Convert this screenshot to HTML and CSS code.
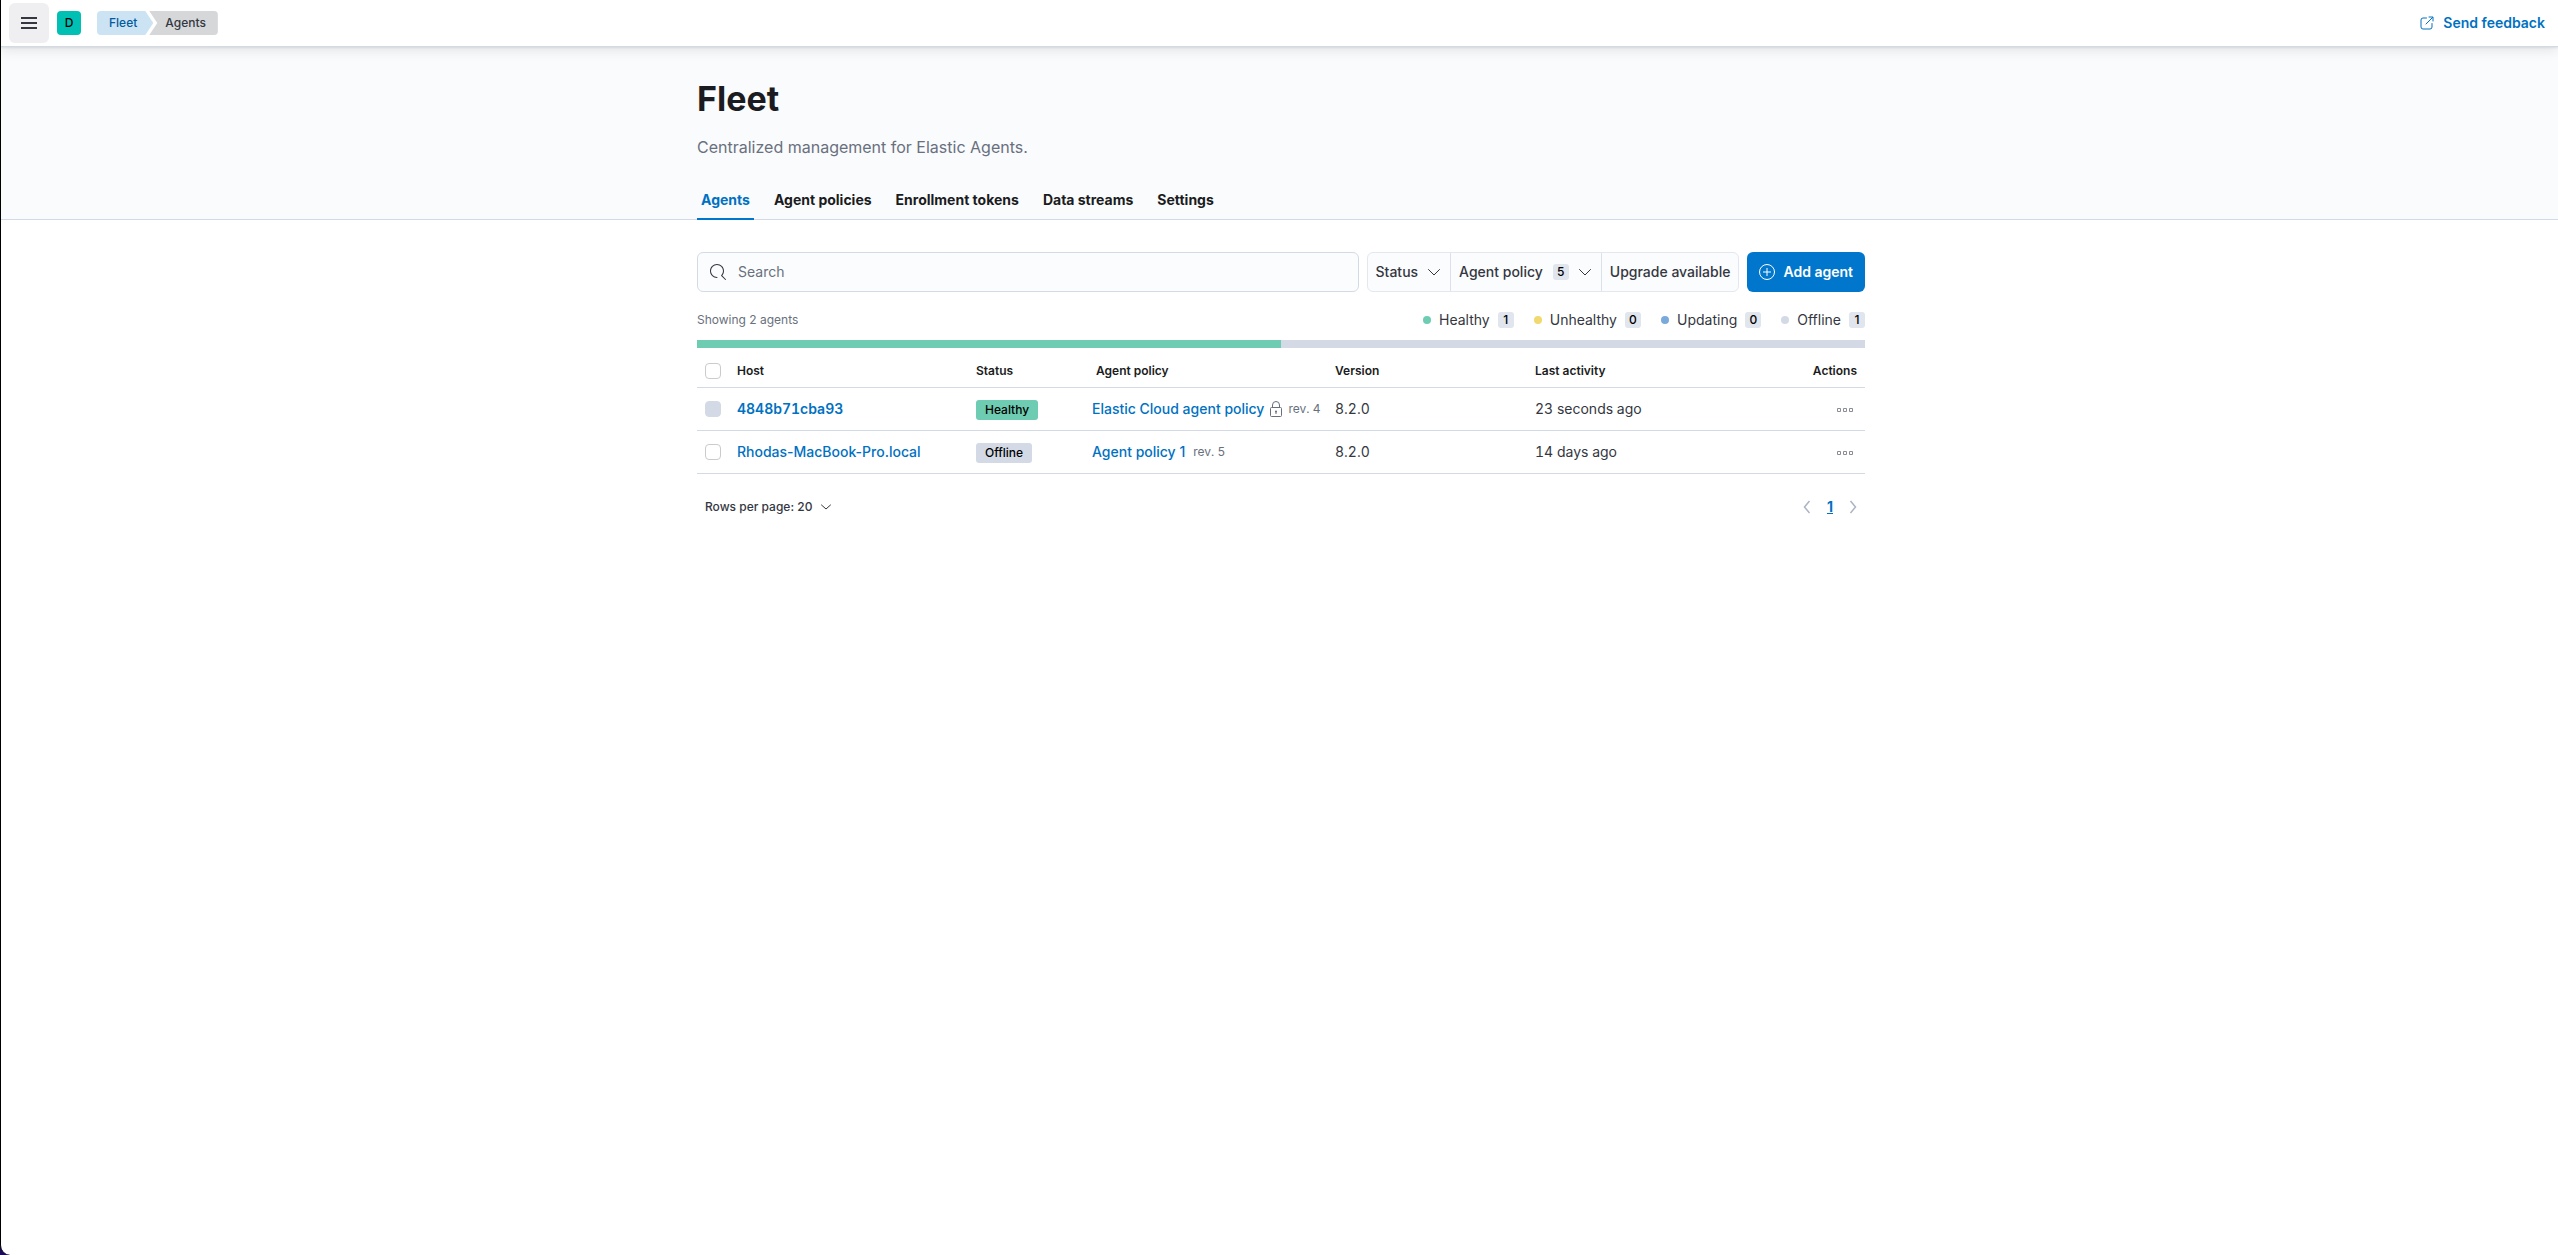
FILE: index.html
```html
<!DOCTYPE html>
<html lang="en">
<head>
<meta charset="utf-8">
<meta name="viewport" content="width=device-width, initial-scale=1">
<title>Agents - Fleet</title>
<link rel="stylesheet" href="styles.css">
</head>
<body>
<div class="app">
  <header class="topbar">
    <button class="menu-button" type="button" aria-label="Toggle navigation">
      <svg width="16" height="16" viewBox="0 0 16 16" fill="currentColor"><path d="M0 2h16v2H0zM0 7h16v2H0zM0 12h16v2H0z"/></svg>
    </button>
    <button class="avatar" type="button">D</button>
    <nav class="breadcrumbs" aria-label="Breadcrumbs">
      <a class="crumb crumb-first" href="#">Fleet</a>
      <span class="crumb crumb-last" aria-current="page">Agents</span>
    </nav>
    <a class="feedback" href="#">
      <svg width="16" height="16" viewBox="0 0 16 16" fill="none" stroke="currentColor" stroke-linecap="round" stroke-linejoin="round"><path d="M7.500 3H4a2 2 0 0 0-2 2v7a2 2 0 0 0 2 2h7a2 2 0 0 0 2-2V8.500M7 9l6.500-6.500M10 2h4v4"/></svg>
      Send feedback
    </a>
  </header>

  <section class="section hero">
    <div class="container">
      <h1>Fleet</h1>
      <p class="tagline">Centralized management for Elastic Agents.</p>
      <nav class="tabs">
        <a class="tab tab-active" href="#">Agents</a>
        <a class="tab" href="#">Agent policies</a>
        <a class="tab" href="#">Enrollment tokens</a>
        <a class="tab" href="#">Data streams</a>
        <a class="tab" href="#">Settings</a>
      </nav>
    </div>
  </section>

  <main class="section">
  <div class="container">
    <div class="toolbar">
      <label class="search">
        <svg width="16" height="16" viewBox="0 0 16 16" fill="currentColor"><path d="M11.271 11.978l3.872 3.873a.502.502 0 00.708 0 .502.502 0 000-.708l-3.565-3.564c2.380-2.747 2.267-6.923-.342-9.532-2.730-2.730-7.170-2.730-9.898 0-2.728 2.729-2.728 7.170 0 9.900a6.955 6.955 0 004.949 2.050.5.5 0 000-1 5.960 5.960 0 01-4.242-1.757 6.010 6.010 0 010-8.486 6.004 6.004 0 018.484 0 6.010 6.010 0 010 8.486.5.5 0 00-.034.738z"/></svg>
        <input type="search" placeholder="Search" aria-label="Search">
      </label>
      <div class="filters">
        <button class="filter" type="button">Status
          <svg class="chevron" width="16" height="16" viewBox="0 0 16 16"><path d="M2.500 5.500 8 11l5.500-5.500"/></svg>
        </button>
        <button class="filter" type="button">Agent policy
          <span class="count filter-count">5</span>
          <svg class="chevron" width="16" height="16" viewBox="0 0 16 16"><path d="M2.500 5.500 8 11l5.500-5.500"/></svg>
        </button>
        <button class="filter" type="button">Upgrade available</button>
      </div>
      <button class="add-agent" type="button">
        <svg width="16" height="16" viewBox="0 0 16 16" fill="none" stroke="currentColor"><circle cx="8" cy="8" r="7.500"/><path d="M8 4v8M4 8h8"/></svg>
        Add agent
      </button>
    </div>

    <div class="summary">
      <span class="showing">Showing 2 agents</span>
      <ul class="legend">
        <li><i class="dot dot-healthy"></i>Healthy<span class="count">1</span></li>
        <li><i class="dot dot-unhealthy"></i>Unhealthy<span class="count">0</span></li>
        <li><i class="dot dot-updating"></i>Updating<span class="count">0</span></li>
        <li><i class="dot dot-offline"></i>Offline<span class="count">1</span></li>
      </ul>
    </div>
    <div class="health-bar"><div class="health-bar-fill" style="width:50%"></div></div>

    <table class="agents">
      <colgroup>
        <col class="col-check"><col class="col-host"><col class="col-status"><col class="col-policy"><col class="col-version"><col class="col-activity"><col>
      </colgroup>
      <thead>
        <tr>
          <th><input type="checkbox" aria-label="Select all rows"></th>
          <th>Host</th>
          <th>Status</th>
          <th>Agent policy</th>
          <th>Version</th>
          <th>Last activity</th>
          <th class="actions">Actions</th>
        </tr>
      </thead>
      <tbody>
        <tr>
          <td><input type="checkbox" aria-label="Select 4848b71cba93" disabled></td>
          <td><a class="host-id" href="#">4848b71cba93</a></td>
          <td><span class="badge badge-healthy">Healthy</span></td>
          <td><div class="policy">
            <a href="#">Elastic Cloud agent policy</a>
            <svg class="lock" width="16" height="16" viewBox="0 0 16 16" fill="none" stroke="currentColor"><rect x="2.500" y="6.500" width="11" height="9" rx="1"/><path d="M4.500 6.500V4a3.500 3.500 0 0 1 7 0v2.500M8 10v3"/><circle cx="8" cy="10.500" r="1" fill="currentColor" stroke="none"/></svg>
            <span class="rev">rev. 4</span>
          </div></td>
          <td>8.2.0</td>
          <td>23 seconds ago</td>
          <td class="actions"><button class="more" type="button" aria-label="Open actions"><svg width="16" height="16" viewBox="0 0 16 16" fill="none" stroke="currentColor"><path d="M.5 6.500h3v3h-3zM6.500 6.500h3v3h-3zM12.500 6.500h3v3h-3z"/></svg></button></td>
        </tr>
        <tr>
          <td><input type="checkbox" aria-label="Select Rhodas-MacBook-Pro.local"></td>
          <td><a href="#">Rhodas-MacBook-Pro.local</a></td>
          <td><span class="badge badge-offline">Offline</span></td>
          <td><div class="policy">
            <a href="#">Agent policy 1</a>
            <span class="rev rev-spaced">rev. 5</span>
          </div></td>
          <td>8.2.0</td>
          <td>14 days ago</td>
          <td class="actions"><button class="more" type="button" aria-label="Open actions"><svg width="16" height="16" viewBox="0 0 16 16" fill="none" stroke="currentColor"><path d="M.5 6.500h3v3h-3zM6.500 6.500h3v3h-3zM12.500 6.500h3v3h-3z"/></svg></button></td>
        </tr>
      </tbody>
    </table>

    <div class="table-footer">
      <button class="page-size" type="button">Rows per page: 20
        <svg class="chevron" width="12" height="12" viewBox="0 0 12 12"><path d="M1.500 4 6 8l4.500-4"/></svg>
      </button>
      <nav class="pagination" aria-label="Pagination">
        <button type="button" aria-label="Previous page" disabled><svg width="16" height="16" viewBox="0 0 16 16"><path d="m10.500 2-5 6 5 6"/></svg></button>
        <a href="#" aria-current="page">1</a>
        <button type="button" aria-label="Next page" disabled><svg width="16" height="16" viewBox="0 0 16 16"><path d="m5.500 2 5 6-5 6"/></svg></button>
      </nav>
    </div>
  </div>
  </main>
</div>
</body>
</html>
```
FILE: styles.css
```css
*, *::before, *::after { box-sizing: border-box; }

html { background: #1c0a5a; }

body {
  margin: 0;
  color: #343741;
  font: 400 14px/20px Inter, "Liberation Sans", sans-serif;
}

button, input { font: inherit; color: inherit; }

button {
  margin: 0;
  padding: 0;
  border: 0;
  background: none;
}

a { color: #0071c2; text-decoration: none; }

svg { display: block; flex: none; }

.app {
  min-height: 100vh;
  background: #fff;
  border-left: 1px solid #000;
  border-bottom-left-radius: 10px;
  overflow: hidden;
}

/* Top bar */

.topbar {
  position: relative;
  display: flex;
  align-items: center;
  height: 47px;
  padding: 0 13px 0 8px;
  background: #fff;
  border-bottom: 1px solid #d3dae6;
  box-shadow: 0 1px 2px rgba(0, 0, 0, .08), 0 3px 12px rgba(0, 0, 0, .1);
}

.menu-button {
  display: grid;
  place-items: center;
  width: 40px;
  height: 40px;
  border-radius: 6px;
  background: #efeff1;
}

.avatar {
  width: 24px;
  height: 24px;
  margin: 0 16px 0 8px;
  border-radius: 4px;
  background: #00bfb3;
  color: #000;
  font-size: 12px;
  font-weight: 500;
}

.breadcrumbs { display: flex; font-size: 12px; font-weight: 500; line-height: 24px; }

.crumb-first {
  padding: 0 16px 0 12px;
  border-radius: 4px 0 0 4px;
  background: #cce3f3;
  color: #005c9e;
  clip-path: polygon(0 0, calc(100% - 8px) 0, 100% 50%, calc(100% - 8px) 100%, 0 100%);
}

.crumb-last {
  margin-left: -4px;
  padding: 0 12px 0 16px;
  border-radius: 0 4px 4px 0;
  background: #d6d7d9;
  clip-path: polygon(0 0, 100% 0, 100% 100%, 0 100%, 8px 50%);
}

.feedback {
  display: flex;
  align-items: center;
  gap: 8px;
  margin-left: auto;
  font-weight: 600;
}

/* Page header */

.section { padding: 0 0 0 3px; }

.container {
  max-width: 1200px;
  margin: 0 auto;
  padding: 32px 16px 0;
}

.hero {
  background: #fafbfd;
  border-bottom: 1px solid #d3dae6;
}

h1 {
  margin: 0;
  color: #1a1c21;
  font-size: 34px;
  font-weight: 700;
  line-height: 40px;
}

.tagline {
  margin: 16px 0 24px;
  color: #69707d;
  font-size: 16px;
  line-height: 24px;
}

.tabs { display: flex; gap: 16px; margin-bottom: -1px; }

.tab {
  padding: 0 4px 1px;
  border-bottom: 2px solid transparent;
  color: #1a1c21;
  font-weight: 700;
  line-height: 34px;
}

.tab-active { border-color: #0077cc; color: #0071c2; }

/* Toolbar */

.toolbar { display: flex; gap: 8px; }

.search {
  display: flex;
  flex: 1;
  align-items: center;
  gap: 12px;
  height: 40px;
  padding: 0 12px;
  border: 1px solid #d3dae6;
  border-radius: 6px;
  background: #fbfcfd;
}

.search input {
  flex: 1;
  min-width: 0;
  padding: 0;
  border: 0;
  outline: 0;
  background: none;
  appearance: none;
}

.search input::placeholder { color: #69707d; opacity: 1; }

.filters {
  display: flex;
  border: 1px solid #e3e8f0;
  border-radius: 6px;
  background: #fbfcfd;
  font-weight: 500;
}

.filter {
  display: flex;
  align-items: center;
  gap: 8px;
  padding: 0 8px;
}

.filter + .filter { border-left: 1px solid #dbe1eb; }

.filter-count { margin-left: 2px; }

.chevron { fill: none; stroke: currentColor; stroke-linecap: round; stroke-linejoin: round; }

.count {
  min-width: 16px;
  padding: 0 4px;
  border-radius: 3px;
  background: #e0e5ee;
  color: #000;
  font-size: 12px;
  font-weight: 500;
  line-height: 16px;
  text-align: center;
}

.add-agent {
  display: flex;
  align-items: center;
  gap: 8px;
  padding: 0 12px;
  border-radius: 6px;
  background: #0077cc;
  color: #fff;
  font-weight: 600;
}

/* Agent counts */

.summary {
  display: flex;
  align-items: center;
  justify-content: space-between;
  height: 56px;
  margin-bottom: -8px;
}

.showing { color: #69707d; font-size: 12px; }

.legend {
  display: flex;
  gap: 20px;
  margin: 0;
  padding: 0;
  list-style: none;
}

.legend li { display: flex; align-items: center; gap: 8px; }

.dot { width: 8px; height: 8px; border-radius: 50%; }
.dot-healthy { background: #6dccb1; }
.dot-unhealthy { background: #f1d86f; }
.dot-updating { background: #79aad9; }
.dot-offline { background: #d3dae6; }

.health-bar { height: 8px; background: #d3dae6; }
.health-bar-fill { height: 8px; background: #6dccb1; }

/* Agents table */

.agents {
  width: 100%;
  border-collapse: separate;
  border-spacing: 0;
  table-layout: fixed;
}

.agents td, .agents .host-id { font-variant-numeric: tabular-nums; }
.agents td a { font-variant-numeric: normal; }

.col-check { width: 32px; }
.col-host { width: 239px; }
.col-status { width: 120px; }
.col-policy { width: 239px; }
.col-version { width: 200px; }
.col-activity { width: 200px; }

.agents th, .agents td {
  height: 43px;
  padding: 0 8px;
  border-bottom: 1px solid #d3dae6;
  text-align: left;
  white-space: nowrap;
}

.agents th {
  height: 40px;
  padding-top: 6px;
  color: #1a1c21;
  font-size: 12px;
  font-weight: 600;
}

.agents td:nth-child(4) { padding: 0 4px; }
.agents td a { font-weight: 500; }
.agents td .host-id { font-variant-numeric: tabular-nums; font-weight: 600; }

.agents input {
  display: block;
  width: 16px;
  height: 16px;
  margin: 0;
  border: 1px solid #c9cbcd;
  border-radius: 4px;
  background: #fff;
  appearance: none;
}

.agents input:disabled { border-color: #d3dae6; background: #d3dae6; }

.agents .actions { text-align: right; }

.badge {
  display: inline-block;
  padding: 0 9px;
  border-radius: 3px;
  color: #000;
  font-size: 12px;
  font-weight: 500;
  line-height: 20px;
  vertical-align: middle;
}

.badge-healthy { background: #6dccb1; }
.badge-offline { background: #d3dae6; }

.policy { display: flex; align-items: center; gap: 4px; }
.lock { color: #69707d; }
.rev { color: #69707d; font-size: 12px; }
.rev-spaced { margin-left: 4px; }

.more { padding: 0 4px; color: #8a8d93; vertical-align: middle; }

/* Table footer */

.table-footer {
  display: flex;
  align-items: center;
  justify-content: space-between;
  padding: 23px 4px 23px 8px;
}

.page-size {
  display: flex;
  align-items: center;
  gap: 8px;
  font-size: 12px;
  font-weight: 500;
}

.pagination { display: flex; align-items: center; gap: 12px; }
.pagination button { padding: 0; }
.pagination svg { fill: none; stroke: #abb4c4; stroke-width: 1.500; }
.pagination a { font-weight: 700; text-decoration: underline; }
```
